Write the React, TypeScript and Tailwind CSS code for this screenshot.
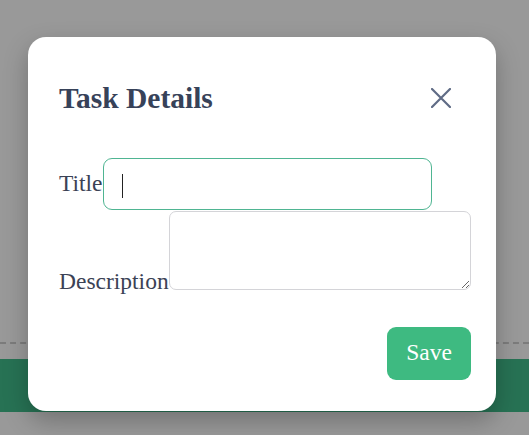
import React from 'react';

const serif = "font-['Liberation_Serif','Times_New_Roman',serif]";

const TaskDetailsModal: React.FC = () => (
  <div
    className={`absolute left-[28px] top-[37px] w-[468px] h-[374px] bg-white rounded-[18px] shadow-[0_10px_25px_rgba(0,0,0,0.25)] pt-[47px] pl-[31px] pr-[25px] text-[#3b4255] ${serif}`}
  >
    <div className="flex items-center justify-between">
      <h2 className="text-[29.5px] leading-none font-bold text-[#374259]">Task Details</h2>
      <button className="mr-[20px] -mt-[2px] text-[#5f6b85]">
        <svg width="20" height="20" viewBox="0 0 20 20" fill="none" stroke="currentColor" strokeWidth="2.2" strokeLinecap="round">
          <path d="M1 1 L19 19 M19 1 L1 19" />
        </svg>
      </button>
    </div>

    <div className="mt-[44px] flex items-baseline">
      <label className="text-[23.5px]">Title</label>
      <div className="relative flex">
        <input
          className={`w-[329px] h-[52px] border border-[#4fb592] rounded-[9px] pl-[18px] text-[23.5px] outline-none ${serif}`}
        />
        {/* caret */}
        <span className="absolute left-[19px] top-[16px] w-[1.5px] h-[24px] bg-[#222]" />
      </div>
    </div>

    <div className="flex items-end mt-[1px]">
      <label className="text-[23.5px] leading-none -mb-[4px]">Description</label>
      <textarea className="w-[302px] h-[79px] border border-[#d4d4d8] rounded-[7px] outline-none" />
    </div>

    <div className="flex justify-end mt-[37px]">
      <button className="w-[84px] h-[53px] rounded-[9px] bg-[#3eba81] text-white text-[23.5px]">Save</button>
    </div>
  </div>
);

export default function App() {
  return (
    <div className="relative w-[529px] h-[435px] overflow-hidden bg-white">
      <div className="h-[342px]" />
      <div className="border-t-2 border-dashed border-[#cfcfcf]" />
      <div className="h-[15px]" />
      <div className="h-[53px] bg-[#42bf8d]" />
      <div className="absolute inset-0 bg-black/40" />
      <TaskDetailsModal />
    </div>
  );
}
